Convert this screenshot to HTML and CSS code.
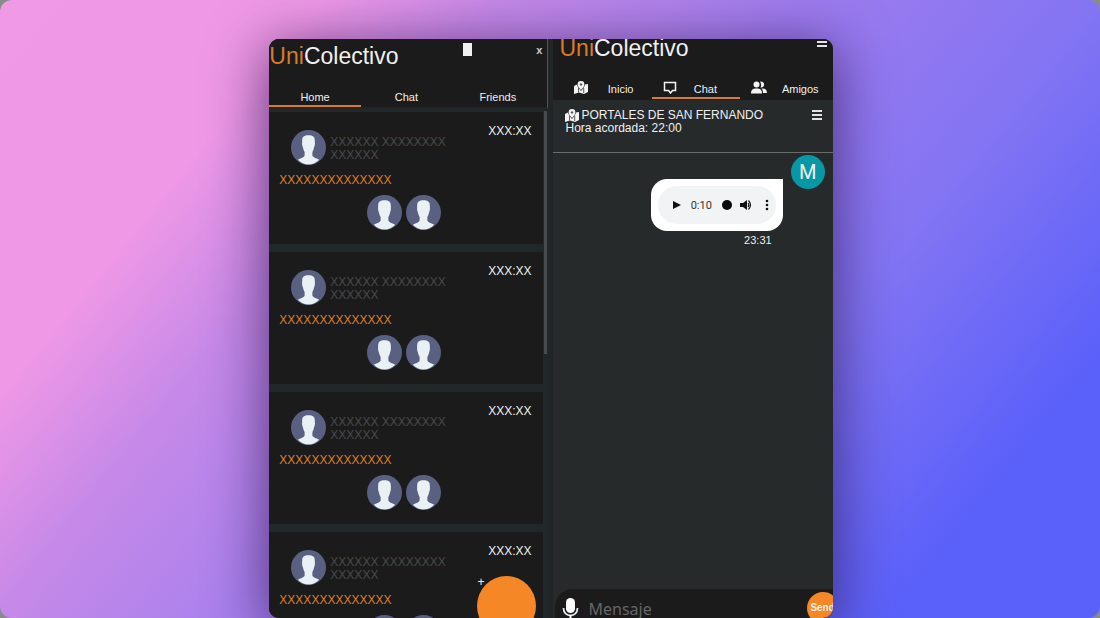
FILE: index.html
```
<!DOCTYPE html>
<html lang="es">
<head>
<meta charset="utf-8">
<meta name="viewport" content="width=device-width, initial-scale=1">
<title>UniColectivo</title>
<link rel="stylesheet" href="styles.css">
</head>
<body>
<svg class="defs" aria-hidden="true">
  <symbol id="avatar" viewBox="0 0 36 36">
    <circle cx="18" cy="18" r="18" fill="#596082"/>
    <path fill="#e9f1f4" d="M11.500 11C11.500 7 13.500 5.500 18 5.500s6.500 1.500 6.500 5.500c.2 3 .2 5-.8 7-.3 2-1 3.500-1.700 4.500v4c1 2 4.500 2.500 7 4A17.500 17.500 0 0 1 18 35.500 17.500 17.500 0 0 1 7 30.500c2.500-1.500 6-2 7-4v-4c-.7-1-1.400-2.500-1.700-4.500-1-2-1-4-.8-7z"/>
  </symbol>
  <symbol id="map" viewBox="0 0 14 13">
    <path fill="#f4f4f4" d="M0 5l3-1.500C3.200 5.500 5 7.500 7 10c2-2.500 3.800-4.500 4-6.500L14 3v8l-4 2-5-1.500L0 13z"/>
    <path fill="#f4f4f4" d="M7 0a3.400 3.400 0 0 1 3.400 3.400C10.400 5.300 8.500 7 7 9 5.500 7 3.600 5.300 3.600 3.400A3.400 3.400 0 0 1 7 0z"/>
    <path fill="none" stroke="#1b1b1b" stroke-width=".7" d="M4.500 7v4.500M9.700 7v5"/>
    <circle cx="7" cy="3.400" r="1.200" fill="#555"/>
  </symbol>
  <symbol id="bars" viewBox="0 0 12 12">
    <path stroke="#e4e4e4" stroke-width="2" d="M1 2h10M1 6h10M1 10h10"/>
  </symbol>
</svg>
<main class="window">
  <section class="home">
    <header class="home-head">
      <div class="bar">
        <h1 class="logo"><span>Uni</span>Colectivo</h1>
        <button class="blank" type="button" aria-label="Menu"></button>
        <button class="close" type="button">x</button>
      </div>
      <nav class="tabs">
        <a class="tab active" href="#home">Home</a>
        <a class="tab" href="#chat">Chat</a>
        <a class="tab" href="#friends">Friends</a>
      </nav>
    </header>
    <div class="feed">
      <div class="cards">
        <article class="card">
          <div class="who"><svg class="avatar"><use href="#avatar"/></svg><p class="name">XXXXXX XXXXXXXX XXXXXX</p><time class="time">XXX:XX</time></div>
          <p class="place">XXXXXXXXXXXXXX</p>
          <div class="riders"><svg class="avatar"><use href="#avatar"/></svg><svg class="avatar"><use href="#avatar"/></svg></div>
        </article>
        <article class="card">
          <div class="who"><svg class="avatar"><use href="#avatar"/></svg><p class="name">XXXXXX XXXXXXXX XXXXXX</p><time class="time">XXX:XX</time></div>
          <p class="place">XXXXXXXXXXXXXX</p>
          <div class="riders"><svg class="avatar"><use href="#avatar"/></svg><svg class="avatar"><use href="#avatar"/></svg></div>
        </article>
        <article class="card">
          <div class="who"><svg class="avatar"><use href="#avatar"/></svg><p class="name">XXXXXX XXXXXXXX XXXXXX</p><time class="time">XXX:XX</time></div>
          <p class="place">XXXXXXXXXXXXXX</p>
          <div class="riders"><svg class="avatar"><use href="#avatar"/></svg><svg class="avatar"><use href="#avatar"/></svg></div>
        </article>
        <article class="card">
          <div class="who"><svg class="avatar"><use href="#avatar"/></svg><p class="name">XXXXXX XXXXXXXX XXXXXX</p><time class="time">XXX:XX</time></div>
          <p class="place">XXXXXXXXXXXXXX</p>
          <div class="riders"><svg class="avatar"><use href="#avatar"/></svg><svg class="avatar"><use href="#avatar"/></svg></div>
        </article>
      </div>
      <div class="track"><div class="thumb"></div></div>
    </div>
    <button class="add" type="button"><span>+</span></button>
  </section>
  <section class="chat">
    <header class="chat-head">
      <div class="bar">
        <h2 class="logo"><span>Uni</span>Colectivo</h2>
        <button class="menu" type="button" aria-label="Menú"><svg class="bars"><use href="#bars"/></svg></button>
      </div>
      <nav class="tabs">
        <a class="tab" href="#inicio"><svg class="tab-icon"><use href="#map"/></svg>Inicio</a>
        <a class="tab active" href="#chat"><svg class="tab-icon" viewBox="0 0 14 13"><path fill="none" stroke="#f4f4f4" stroke-width="1.500" d="M1.500 1.500h11v8H9.500L7.500 12 5.500 9.500h-4z"/></svg>Chat</a>
        <a class="tab" href="#amigos"><svg class="tab-icon wide" viewBox="0 0 16 13"><g fill="#f4f4f4"><circle cx="5.500" cy="3.600" r="3"/><path d="M0 12.500c0-4 2-5 5.500-5s5.500 1 5.500 5z"/><path d="M9 .8a3 3 0 1 1 .5 5.700c1-1.800.8-4-.5-5.700z"/><path d="M10.500 7.500c3.500-.3 5.500 1 5.500 4.500h-4c0-2-.4-3.500-1.500-4.500z"/></g></svg>Amigos</a>
      </nav>
    </header>
    <div class="trip">
      <div class="trip-text">
        <p class="trip-place"><svg class="tab-icon"><use href="#map"/></svg>PORTALES DE SAN FERNANDO</p>
        <p>Hora acordada: 22:00</p>
      </div>
      <button class="menu" type="button" aria-label="Opciones"><svg class="bars"><use href="#bars"/></svg></button>
    </div>
    <div class="messages">
      <div class="message">
        <div class="bubble">
          <div class="player">
            <button class="ctl" type="button" aria-label="Reproducir"><svg viewBox="0 0 12 12"><path d="M2 2l8 4-8 4z"/></svg></button>
            <span class="clock">0:10</span>
            <input class="seek" type="range" min="0" max="10" value="5" aria-label="Posición">
            <button class="ctl" type="button" aria-label="Volumen"><svg viewBox="0 0 12 12"><path d="M0 4h3l4-3v10L3 8H0z"/><path fill="none" stroke="#111" stroke-width="1.200" d="M8 4q1.500 2 0 4M8.500 1.500q4 4.500 0 9"/></svg></button>
            <button class="ctl more" type="button" aria-label="Más"><svg viewBox="0 0 12 12"><circle cx="6" cy="2" r="1.300"/><circle cx="6" cy="6" r="1.300"/><circle cx="6" cy="10" r="1.300"/></svg></button>
          </div>
        </div>
        <time class="sent">23:31</time>
      </div>
      <div class="initial">M</div>
    </div>
    <form class="compose">
      <svg class="mic" viewBox="0 0 16 20"><rect x="3.500" y="0" width="9" height="15" rx="4.500" fill="#fff"/><path fill="none" stroke="#dfe8ec" stroke-width="1.800" d="M1 10c0 10 14 10 14 0"/><path stroke="#fff" stroke-width="2" d="M8 17v3"/></svg>
      <input class="field" type="text" placeholder="Mensaje" aria-label="Mensaje">
      <button class="send" type="button">Send</button>
    </form>
  </section>
</main>
</body>
</html>
```
FILE: styles.css
```
* { box-sizing: border-box; }
html { height: 100%; background: #8a8a8a; }
body {
  margin: 0;
  height: 100vh;
  overflow: hidden;
  display: flex;
  justify-content: center;
  padding: 39px 0 0 2px;
  border-radius: 12px;
  background: linear-gradient(129deg, #f09ae6 0%, #ee98e6 20%, #c689e8 31%, #b083ec 42%, #9f7cee 50%, #8274f3 69%, #5a60fa 87%, #5a60fa 100%);
  font-family: "Liberation Sans", Arial, sans-serif;
  font-size: 12px;
  color: #f0f0f0;
}
h1, h2, p { margin: 0; }
button { border: 0; padding: 0; background: none; color: inherit; font: inherit; }
a { color: inherit; text-decoration: none; }
.defs { position: absolute; width: 0; height: 0; }
.window {
  width: 51.300%;
  display: grid;
  grid-template-columns: 1fr 1fr;
  gap: 5px;
  border-radius: 10px;
  overflow: hidden;
  background: #222526;
  box-shadow: 0 10px 56px 4px rgba(30, 10, 60, .6);
}
.home, .chat { position: relative; min-width: 0; min-height: 0; display: flex; flex-direction: column; }
.home { background: #202829; }
.home-head { background: #1b1b1b; border-right: 1px solid #555; border-bottom: 2px solid #222526; }
.bar { display: flex; align-items: flex-start; }
.logo { font-size: 23px; line-height: 26px; font-weight: 400; }
.logo span { color: #d87b2b; }
.home-head .bar { padding: 4px 5px 0 0; height: 48px; }
.blank { width: 9px; height: 13px; background: #f0f0f0; margin-left: auto; }
.close { margin-left: 64px; font-size: 11px; line-height: 14px; font-weight: 700; color: #ccc; }
.tabs { display: flex; font-size: 11px; line-height: 16px; }
.tab { border-bottom: 2px solid transparent; }
.tab.active { border-color: #d87b2b; }
.home .tab { flex: 1; text-align: center; padding: 2px 0 0; }
.home .tabs { padding-right: 4px; }
.feed { flex: 1; min-height: 0; display: flex; gap: 1px; overflow: hidden; }
.cards { flex: 1; display: flex; flex-direction: column; gap: 8px; padding-top: 3px; }
.card { background: #1b1b1b; flex: none; padding: 13px 12px 14px 10px; }
.who { display: flex; height: 46px; padding-left: 12px; gap: 4px; }
.avatar { width: 35px; height: 35px; flex: none; }
.who .avatar { margin-top: 5px; }
.name { flex: 1; color: #494949; line-height: 13px; padding-top: 11px; }
.time { line-height: 12px; }
.place { color: #dd7f2d; line-height: 18px; }
.riders { display: flex; justify-content: center; gap: 4px; padding: 6px 2px 0 0; }
.track { width: 4px; padding-top: 2px; }
.thumb { height: 48%; width: 3px; background: #484b4d; }
.add { position: absolute; right: 12px; bottom: -18px; width: 59px; height: 60px; border-radius: 50%; background: #f58726; }
.add span { position: absolute; left: 0; top: 0; line-height: 12px; }
.chat { background: #272a2b; }
.chat-head { background: #1b1b1b; padding-left: 6px; height: 61px; }
.chat-head .bar { height: 42px; justify-content: space-between; padding-right: 5px; }
.chat-head .logo { line-height: 18px; }
.bars { display: block; width: 12px; height: 12px; }
.chat-head .menu { margin-top: -3px; }
.chat .tabs { justify-content: space-between; }
.chat .tab { display: flex; justify-content: space-between; width: 88px; padding: 0 23px 0 11px; }
.chat .tab:first-child { padding: 0 14px 0 15px; }
.chat .tab:last-child { padding: 0 14px 0 6px; }
.tab-icon { width: 14px; height: 13px; }
.tab-icon.wide { width: 16px; }
.trip { display: flex; justify-content: space-between; height: 53px; padding: 9px 10px 0 12px; border-bottom: 1px solid #696b6c; line-height: 13px; }
.trip-place { display: flex; gap: 2px; }
.trip .menu { align-self: flex-start; }
.messages { flex: 1; display: flex; justify-content: flex-end; align-items: flex-start; gap: 8px; padding: 2px 8px 0 0; }
.message { padding-top: 24px; display: flex; flex-direction: column; align-items: flex-end; }
.bubble { background: #fff; border-radius: 16px 0 16px 16px; padding: 7px; width: 132px; }
.player { display: flex; align-items: center; height: 38px; border-radius: 19px; background: #f1f3f4; padding: 0 3px 0 13px; color: #333; }
.ctl { width: 12px; height: 12px; flex: none; }
.ctl svg { display: block; width: 12px; height: 12px; fill: #111; }
.clock { font: 11px Roboto, sans-serif; margin-left: 8px; }
.seek { appearance: none; background: none; width: 10px; height: 10px; margin: 0 8px 0 10px; border-radius: 50%; }
.seek::-webkit-slider-thumb { appearance: none; width: 10px; height: 10px; border-radius: 50%; background: #080808; }
.more { margin-left: auto; }
.sent { font-size: 11px; line-height: 14px; padding: 2px 11px 0 0; }
.initial { width: 34px; height: 34px; border-radius: 50%; background: #0797a5; font: 20px/34px Roboto, sans-serif; text-align: center; }
.compose { display: flex; align-items: center; height: 29px; margin-left: 2px; padding: 8px 0 0 7px; background: #1b1b1b; border-radius: 18px 0 0 0; }
.mic { width: 17px; height: 20px; flex: none; }
.field { flex: 1; min-width: 0; border: 0; padding: 2px 0 0 9px; background: none; font: 16px "Noto Sans", sans-serif; color: #ddd; }
.field::placeholder { color: #666; opacity: 1; }
.send { width: 32px; height: 32px; flex: none; margin-right: -6px; border-radius: 50%; background: #f58726; font-size: 10px; font-weight: 700; }
```
